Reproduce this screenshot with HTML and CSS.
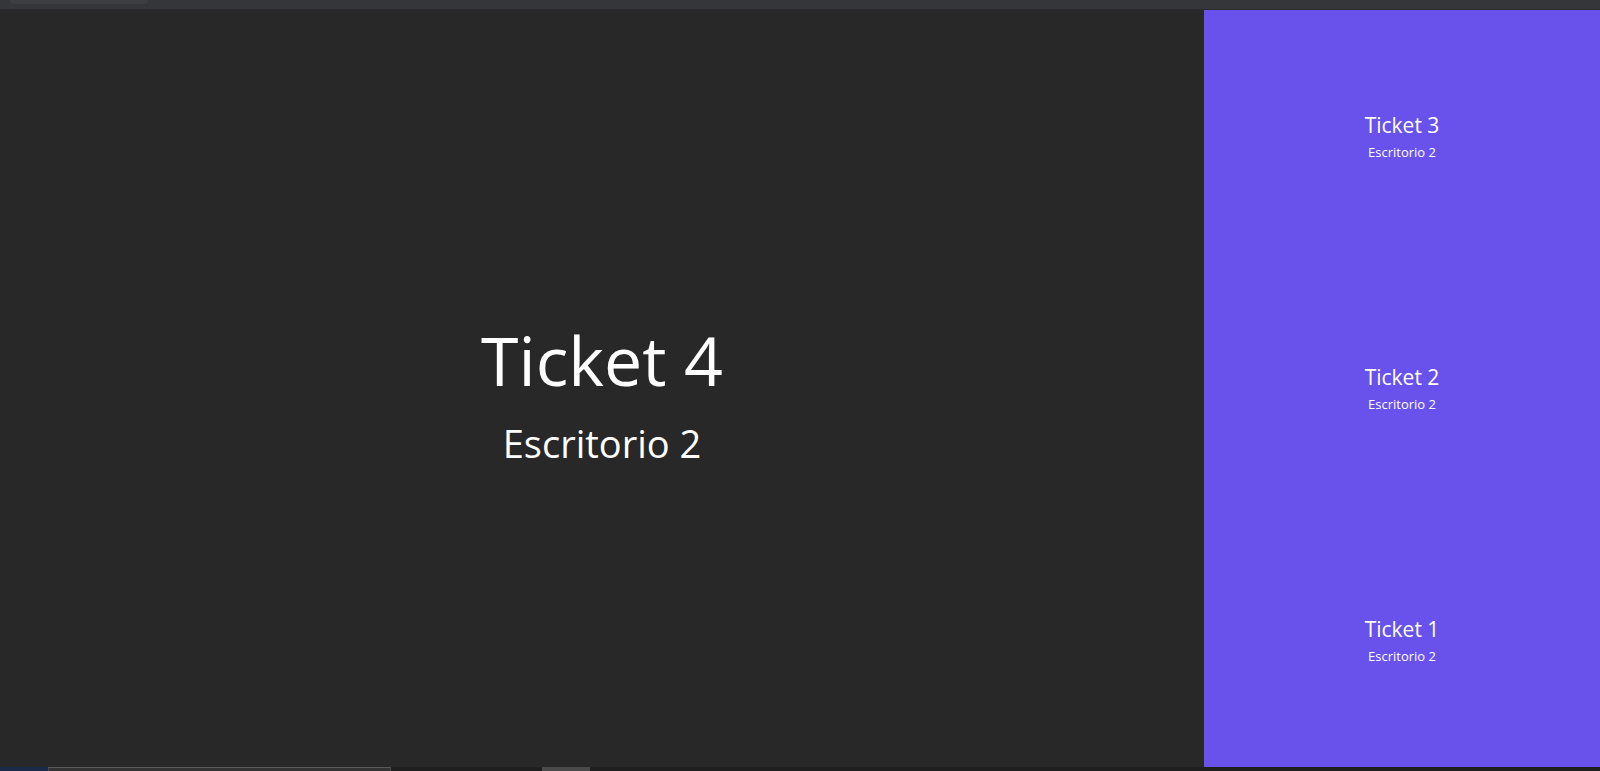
FILE: index.html
```html
<!DOCTYPE html>
<html lang="es">
<head>
<meta charset="utf-8">
<title>Tickets</title>
<link rel="stylesheet" href="styles.css">
</head>
<body>
<div class="app">
  <div class="topbar"><div class="tab"></div></div>
  <div class="screen">
    <main class="current">
      <div class="current-ticket">Ticket 4</div>
      <div class="current-desk">Escritorio 2</div>
    </main>
    <aside class="history">
      <div class="history-item">
        <div class="history-ticket">Ticket 3</div>
        <div class="history-desk">Escritorio 2</div>
      </div>
      <div class="history-item">
        <div class="history-ticket">Ticket 2</div>
        <div class="history-desk">Escritorio 2</div>
      </div>
      <div class="history-item">
        <div class="history-ticket">Ticket 1</div>
        <div class="history-desk">Escritorio 2</div>
      </div>
    </aside>
  </div>
  <div class="bottombar">
    <div class="bb-blue"></div>
    <div class="bb-box"></div>
    <div class="bb-gap"></div>
    <div class="bb-chip"></div>
    <div class="bb-rest"></div>
  </div>
</div>
</body>
</html>
```
FILE: styles.css
```css
* { box-sizing: border-box; }
html, body { margin: 0; padding: 0; }
body {
  width: 1600px;
  height: 771px;
  overflow: hidden;
  background: #1f1f1f;
  font-family: "Open Sans", "Noto Sans", sans-serif;
  color: #ffffff;
}
.app {
  display: grid;
  grid-template-rows: 10px 757px 4px;
  height: 771px;
}
.topbar {
  background: #35363a;
  border-bottom: 1px solid #2b2c2e;
  padding-left: 10px;
}
.tab {
  width: 138px;
  height: 4px;
  background: #3d3e42;
  border-radius: 0 0 6px 6px;
}
.screen {
  display: flex;
}
.current {
  flex: 1;
  background: #282828;
  display: flex;
  flex-direction: column;
  align-items: center;
  justify-content: center;
  padding-top: 8px;
}
.current-ticket {
  font-size: 68px;
  line-height: 1.2;
  font-weight: 400;
}
.current-desk {
  font-size: 38px;
  line-height: 1.2;
  margin-top: 20px;
}
.history {
  width: 396px;
  background: #6951ec;
  display: flex;
  flex-direction: column;
}
.history-item {
  flex: 1;
  display: flex;
  flex-direction: column;
  align-items: center;
  justify-content: center;
  padding-top: 1px;
}
.history-ticket {
  font-size: 21px;
  line-height: 1.2;
}
.history-desk {
  font-size: 13px;
  line-height: 1.3;
  margin-top: 6px;
}
.bottombar {
  display: flex;
  background: #1f1f1f;
}
.bb-blue { width: 48px; background: #1b2a48; }
.bb-box { width: 343px; background: #333333; border-top: 1px solid #5a5a5a; border-left: 1px solid #4a4a4a; border-right: 1px solid #4a4a4a; }
.bb-gap { width: 151px; }
.bb-chip { width: 48px; background: #4a4a4a; }
.bb-rest { flex: 1; }
```
